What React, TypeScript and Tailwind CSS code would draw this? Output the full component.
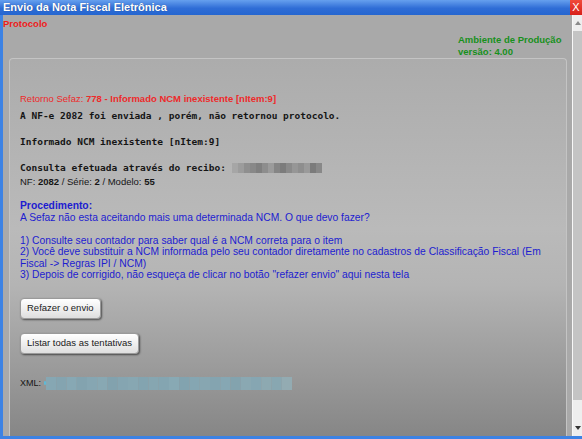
import React from "react";

const sans = "font-['Liberation_Sans',Arial,sans-serif]";
const mono = "font-['DejaVu_Sans_Mono','Liberation_Mono',monospace]";

// pixelated, redacted receipt number
const receiptCells = [
  "#a6a6a6", "#9c9c9c", "#8f8f8f", "#888888", "#7f7f7f", "#8d8d8d", "#9b9b9b", "#858585",
  "#7c7c7c", "#8a8a8a", "#969696", "#8e8e8e", "#9a9a9a", "#7b7b7b", "#888888",
];

// pixelated, redacted XML key
const xmlCells = [
  "#86a7b3", "#84a4b0", "#87a8b4", "#83a3af", "#86a6b2", "#88a8b3", "#82a2ae", "#85a5b1",
  "#87a7b2", "#83a4b0", "#86a6b1", "#84a5b1", "#88a9b4", "#82a3af", "#85a6b2", "#87a6b1",
  "#84a4b0", "#86a7b3", "#83a3ae", "#8aa8b2", "#86a6b2", "#8da9b1", "#88a7b1", "#93abb2",
];

function Redacted({ cells, w, h, cell }: { cells: string[]; w: number; h: number; cell: number }) {
  return (
    <svg width={w} height={h} viewBox={`0 0 ${w} ${h}`} className="block shrink-0">
      {cells.map((c, i) => (
        <rect key={i} x={i * cell} y={0} width={cell} height={h} fill={c} />
      ))}
    </svg>
  );
}

function Button({ children }: { children: React.ReactNode }) {
  return (
    <button
      className={`${sans} h-[21px] px-[6px] rounded-[4px] border border-[#9a9a9a] bg-[linear-gradient(to_bottom,#ffffff,#ececec_60%,#dedede)] text-[9.5px] text-[#1a1a1a] shadow-[1px_1px_2px_rgba(0,0,0,0.55)] leading-none`}
    >
      {children}
    </button>
  );
}

function Scrollbar() {
  return (
    <div className="w-[10px] flex flex-col bg-[#eeeeee] border-l border-[#f8f8f8]">
      <div className="h-[16px] flex items-center justify-center">
        <svg width="6" height="4" viewBox="0 0 6 4">
          <path d="M0 4 L3 0 L6 4 Z" fill="#8a8a8a" />
        </svg>
      </div>
      <div className="h-[369px] bg-[#c4c4c4]" />
      <div className="flex-1" />
      <div className="h-[16px] flex items-center justify-center">
        <svg width="6" height="4" viewBox="0 0 6 4">
          <path d="M0 0 L6 0 L3 4 Z" fill="#333333" />
        </svg>
      </div>
    </div>
  );
}

export default function App() {
  return (
    <div className={`${sans} w-[582px] h-[439px] overflow-hidden flex flex-col bg-[#3c82e4]`}>
      {/* window title */}
      <div className="h-[15px] flex items-center bg-[linear-gradient(to_bottom,#66a0ee,#2f6dd6_55%,#2566d0)]">
        <span className="pl-[3px] text-[11px] font-bold text-white leading-none [text-shadow:0_0_1px_rgba(0,0,0,0.4)]">
          Envio da Nota Fiscal Eletrônica
        </span>
        <div className="ml-auto w-[12px] h-[15px] flex items-center justify-center bg-[linear-gradient(to_bottom,#f04a3a,#d8201a)] text-white text-[11px] leading-none">
          X
        </div>
      </div>

      <div className="flex-1 min-h-0 flex pl-[3px] pb-[3px]">
        <div className="flex-1 min-w-0 flex bg-[#a9a9a9]">
          <div className="flex-1 min-w-0 flex flex-col">
            <div className="pt-[3px] text-[9.5px] leading-[12px] font-bold text-[#ee1c1c]">Protocolo</div>

            <div className="mt-[4px] pl-[455px] text-[9.5px] leading-[11.5px] font-bold text-[#17901c]">
              <div>Ambiente de Produção</div>
              <div>versão: 4.00</div>
            </div>

            <div className="mt-[1px] ml-[6px] mr-[5px] flex-1 min-h-0 overflow-hidden rounded-t-[4px] border border-b-0 border-[#c4c4c4] bg-[linear-gradient(to_bottom,#acacac_0%,#bababa_45%,#b4b4b4_60%,#868686_100%)] pl-[10px] pt-[34px]">
              <div className="text-[9.5px] leading-[12px] text-[#ee2a2a]">
                Retorno Sefaz: <b>778 - Informado NCM inexistente [nItem:9]</b>
              </div>

              <div className={`${mono} mt-[4px] text-[9.5px] leading-[13px] font-bold text-[#151515]`}>
                A NF-e 2082 foi enviada , porém, não retornou protocolo.
              </div>
              <div className={`${mono} mt-[13px] text-[9.5px] leading-[13px] font-bold text-[#151515]`}>
                Informado NCM inexistente [nItem:9]
              </div>
              <div className={`${mono} mt-[13px] flex items-center text-[9.5px] leading-[13px] font-bold text-[#151515]`}>
                <span className="whitespace-pre">Consulta efetuada através do recibo: </span>
                <Redacted cells={receiptCells} w={90} h={10} cell={6} />
              </div>
              <div className="mt-[2px] text-[9.5px] leading-[12px] text-[#151515]">
                NF: <b>2082</b> / Série: <b>2</b> / Modelo: <b>55</b>
              </div>

              <div className="mt-[12px] w-[530px] text-[10.3px] leading-[11.5px] text-[#1d1dd0]">
                <div className="font-bold">Procedimento:</div>
                <div>A Sefaz não esta aceitando mais uma determinada NCM. O que devo fazer?</div>
                <div className="h-[11.5px]" />
                <div>1) Consulte seu contador para saber qual é a NCM correta para o item</div>
                <div>
                  2) Você deve substituir a NCM informada pelo seu contador diretamente no cadastros de
                  Classificação Fiscal (Em Fiscal -&gt; Regras IPI / NCM)
                </div>
                <div>3) Depois de corrigido, não esqueça de clicar no botão "refazer envio" aqui nesta tela</div>
              </div>

              <div className="mt-[17px] flex flex-col items-start gap-[14px]">
                <Button>Refazer o envio</Button>
                <Button>Listar todas as tentativas</Button>
              </div>

              <div className="mt-[23px] flex items-center gap-[3px] text-[9px] leading-[13px] text-[#151515]">
                <span>XML:</span>
                <div className="flex items-center">
                  <div className="w-[2px] h-[4px] rounded-full bg-[#5fb9d6]" />
                  <Redacted cells={xmlCells} w={246} h={13} cell={10.25} />
                </div>
              </div>
            </div>
          </div>
          <Scrollbar />
        </div>
      </div>
    </div>
  );
}
